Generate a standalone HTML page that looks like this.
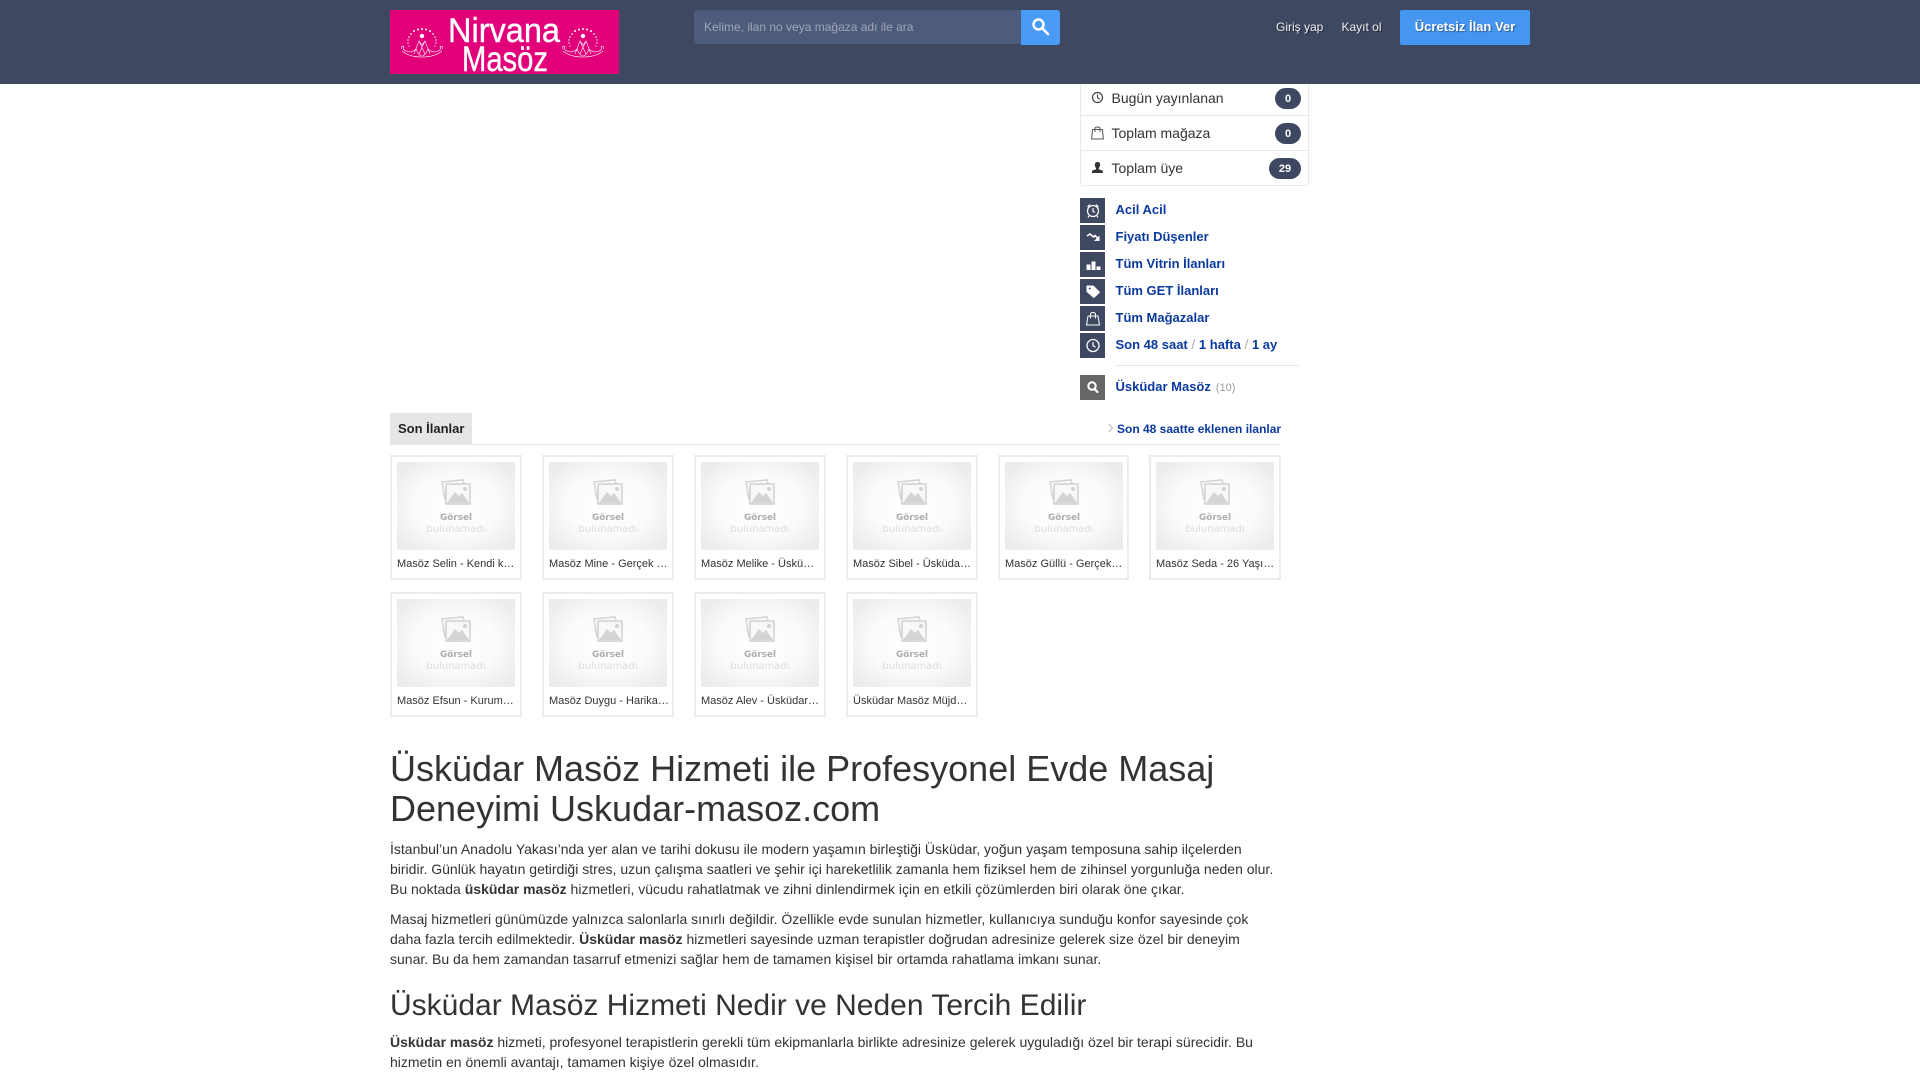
<!DOCTYPE html>
<html lang="tr"><head><meta charset="utf-8"><title>Üsküdar Masöz</title>
<style>
*{box-sizing:border-box}
html,body{margin:0;padding:0;width:1920px;height:1080px;overflow:hidden;background:#fff}
body{font-family:"Liberation Sans",sans-serif;font-size:14px;color:#333;position:relative}
.a{position:absolute;white-space:nowrap}
a{color:#0b3a9e;text-decoration:none}
.hd{left:0;top:0;width:1920px;height:84px;background:#3f4861}
.ib{position:absolute;left:1080px;width:25px;height:25px;background:#3f4861}
.ib svg{display:block}
.sl{position:absolute;left:1115.5px;font-size:13px;font-weight:bold;line-height:20px;white-space:nowrap}
.sl i{font-style:normal;font-weight:normal;color:#aaa;font-size:14px;line-height:1}
.stat{position:absolute;left:1080px;width:229px;height:35px;border:1px solid #e9e9e9;border-top:0}
.st{position:absolute;left:1111.5px;line-height:20px;font-size:14px;color:#333}
.bd{position:absolute;height:21px;border-radius:11px;background:#3f4861;color:#fff;font-size:11px;font-weight:bold;text-align:center;line-height:22px}
.card{position:absolute;width:132px;height:125px;border:2px solid #ececec;background:#fff}
.card svg{position:absolute;left:5px;top:5px;display:block}
.card div{position:absolute;left:5px;top:99px;width:119px;font-size:11px;line-height:16px;color:#333;white-space:nowrap;overflow:hidden;text-overflow:ellipsis}
h1,h2{margin:0;font-weight:normal;color:#333}
</style></head><body>
<svg width="0" height="0" style="position:absolute"><defs>
<radialGradient id="g" cx="50%" cy="50%" r="62%"><stop offset="0" stop-color="#fff"/><stop offset=".55" stop-color="#fbfbfb"/><stop offset="1" stop-color="#ececec"/></radialGradient>
<g id="ph">
<rect width="118" height="88" fill="url(#g)"/>
<path d="M48 38 45 20l21-2 1 3" fill="none" stroke="#d4d4d4" stroke-width="1.6"/>
<rect x="49" y="22" width="24" height="20" fill="#f8f8f8" stroke="#d2d2d2" stroke-width="1.6"/>
<path d="M50 41 58 30 62 34 65 31 72 41Z" fill="#d4d4d4"/><circle cx="68" cy="27" r="2" fill="#d2d2d2"/>
<text x="59" y="58" text-anchor="middle" font-family="DejaVu Sans" font-size="9" font-weight="bold" fill="#aeaeae" textLength="32" lengthAdjust="spacingAndGlyphs">Görsel</text>
<text x="59" y="70" text-anchor="middle" font-family="DejaVu Sans" font-size="10" fill="#dcdcdc" textLength="59" lengthAdjust="spacingAndGlyphs">bulunamadı</text>
</g>
<g id="orn" fill="none" stroke="#fff" stroke-width=".6">
<g fill="#fff" stroke="none"><circle cy="-13" r="1"/><circle cx="-4" cy="-12.5" r="1"/><circle cx="4" cy="-12.5" r="1"/><circle cx="-8" cy="-11" r="1"/><circle cx="8" cy="-11" r="1"/><circle cx="-11" cy="-8" r=".9"/><circle cx="11" cy="-8" r=".9"/><circle cx="-13" cy="-5" r=".8"/><circle cx="13" cy="-5" r=".8"/><circle cx="-14" cy="-2" r=".7"/><circle cx="14" cy="-2" r=".7"/><circle cx="-14" cy="1" r=".7"/><circle cx="14" cy="1" r=".7"/><circle cx="-13" cy="4" r=".6"/><circle cx="13" cy="4" r=".6"/><circle cy="-6" r="2.2"/></g>
<path d="M-8 12-3-1 3 12M8 12 3-1-3 12M-3-1 0 3 3-1"/>
<path d="M-20 7c-2-2 1-4 2-2-1 1-1 3 2 4 4 2 7 1 10-2 2 5 4 7 6 7s4-2 6-7c3 3 6 4 10 2 3-1 3-3 2-4 1-2 4 0 2 2"/>
<path d="M-20 9c6 5 14 6 20 6s14-1 20-6"/>
</g>
</defs></svg>

<div class="a hd"></div>
<svg class="a" style="left:390px;top:10px" width="229" height="64" viewBox="0 0 229 64">
<rect width="229" height="64" fill="#e2007a"/>
<use href="#orn" x="32" y="32"/><use href="#orn" x="193" y="32"/>
<text x="58" y="32" font-family="Liberation Sans" font-size="34" fill="#fff" stroke="#fff" stroke-width=".4" textLength="112" lengthAdjust="spacingAndGlyphs">Nirvana</text>
<text x="72" y="61" font-family="Liberation Sans" font-size="35" fill="#fff" stroke="#fff" stroke-width=".4" textLength="86" lengthAdjust="spacingAndGlyphs">Masöz</text>
</svg>

<div class="a" style="left:694px;top:10px;width:328px;height:34px;background:#4d5b7c;border-radius:3px 0 0 3px"></div>
<div class="a" style="left:704px;top:10px;line-height:34px;font-size:12px;color:#a0a6b4">Kelime, ilan no veya mağaza adı ile ara</div>
<div class="a" style="left:1021px;top:10px;width:39px;height:35px;background:#4a9bf5;border-radius:0 3px 3px 0"></div>
<svg class="a" style="left:1031px;top:17px" width="19" height="19" viewBox="0 0 19 19"><circle cx="7.500" cy="7.500" r="5" fill="none" stroke="#fff" stroke-width="2.400"/><path d="M11 11l6 6" stroke="#fff" stroke-width="2.600" stroke-linecap="round"/></svg>

<div class="a" style="left:1276px;top:17px;line-height:20px;font-size:12px;color:#f0f0f0;text-shadow:1px 1px 1px #222a3c">Giriş yap</div>
<div class="a" style="left:1341.500px;top:17px;line-height:20px;font-size:12px;color:#f0f0f0;text-shadow:1px 1px 1px #222a3c">Kayıt ol</div>
<div class="a" style="left:1400px;top:10px;width:130px;height:35px;background:#4496f0;border-radius:2px;color:#fff;font-size:13px;font-weight:bold;text-align:center;line-height:34px;text-shadow:1px 1px 1px #2c5c99">Ücretsiz İlan Ver</div>

<!-- stats -->
<div class="stat" style="top:84px;height:32px"></div>
<div class="stat" style="top:116px"></div>
<div class="stat" style="top:151px;border-radius:0 0 3px 3px"></div>
<svg class="a" style="left:1091px;top:91px" width="13" height="13" viewBox="0 0 13 13"><circle cx="6.500" cy="6.500" r="5" fill="none" stroke="#444" stroke-width="1.200"/><path d="M6.500 3.500v3.200l2.400 1.400" fill="none" stroke="#444" stroke-width="1.100"/></svg>
<svg class="a" style="left:1091px;top:126px" width="13" height="14" viewBox="0 0 13 14"><path d="M1.500 3.500h10l.8 9.500H.7zM4 6V2.500C4 1.500 5 1 6.500 1S9 1.500 9 2.500V6" fill="none" stroke="#555" stroke-width="1"/></svg>
<svg class="a" style="left:1091px;top:161px" width="13" height="13" viewBox="0 0 13 13"><path d="M6.500 1c1.800 0 2.700 1.200 2.700 2.800 0 1.300-.8 2.700-1.400 3.300v1.100l4 1.600V12H1v-2.200l4-1.600V7.100C4.400 6.500 3.800 5.100 3.800 3.800 3.800 2.200 4.700 1 6.500 1z" fill="#333"/></svg>
<div class="st" style="top:88px">Bugün yayınlanan</div>
<div class="st" style="top:123px">Toplam mağaza</div>
<div class="st" style="top:158px">Toplam üye</div>
<div class="bd" style="left:1275px;top:88px;width:26px">0</div>
<div class="bd" style="left:1275px;top:123px;width:26px">0</div>
<div class="bd" style="left:1269px;top:158px;width:32px">29</div>

<!-- side links -->
<div class="ib" style="top:198px"><svg width="25" height="25" viewBox="0 0 25 25"><circle cx="13" cy="13" r="5.500" fill="none" stroke="#fff" stroke-width="1.200"/><path d="M13 10v3.300l2 1.200M7.500 9 10 6.500M18.500 9 16 6.500M9 18l-1 1.500M17 18l1 1.500" fill="none" stroke="#fff" stroke-width="1.200"/></svg></div>
<div class="ib" style="top:225px"><svg width="25" height="25" viewBox="0 0 25 25"><path d="M7 11l3-2 3.500 3 1.500-1.500 3 3" fill="none" stroke="#fff" stroke-width="1.600"/><path d="M19.500 10.500V16H14z" fill="#fff"/></svg></div>
<div class="ib" style="top:252px"><svg width="25" height="25" viewBox="0 0 25 25" fill="#fff"><rect x="6.500" y="12.500" width="4" height="5.500"/><rect x="11.500" y="9.500" width="4" height="8.500"/><rect x="16.500" y="14.500" width="4" height="3.500"/></svg></div>
<div class="ib" style="top:279px"><svg width="25" height="25" viewBox="0 0 25 25"><path d="M7 7h6.200l6.300 6.300-5.700 5.200-6.800-6z" fill="#fff" stroke="#fff" stroke-linejoin="round"/><circle cx="9.700" cy="9.500" r="1" fill="#3f4861"/></svg></div>
<div class="ib" style="top:306px"><svg width="25" height="25" viewBox="0 0 25 25"><path d="M8 10h10l1.500 9h-13zM10.500 12.500V8.500c0-1.200 1-2 2.500-2s2.500.8 2.500 2v4" fill="none" stroke="#fff" stroke-width="1"/></svg></div>
<div class="ib" style="top:333px"><svg width="25" height="25" viewBox="0 0 25 25"><circle cx="13" cy="12.500" r="6" fill="none" stroke="#fff" stroke-width="1.300"/><path d="M13 9v3.800l2.600 1.300" fill="none" stroke="#fff" stroke-width="1.200"/></svg></div>
<div class="ib" style="top:375px;background:#666"><svg width="25" height="25" viewBox="0 0 25 25"><circle cx="12" cy="11" r="3.700" fill="none" stroke="#fff" stroke-width="2"/><path d="M14.500 14l3 3" stroke="#fff" stroke-width="2.200" stroke-linecap="round"/></svg></div>

<div class="sl" style="top:200px"><a href="#">Acil Acil</a></div>
<div class="sl" style="top:227px"><a href="#">Fiyatı Düşenler</a></div>
<div class="sl" style="top:254px"><a href="#">Tüm Vitrin İlanları</a></div>
<div class="sl" style="top:281px"><a href="#">Tüm GET İlanları</a></div>
<div class="sl" style="top:308px"><a href="#">Tüm Mağazalar</a></div>
<div class="sl" style="top:335px"><a href="#">Son 48 saat</a> <i>/</i> <a href="#">1 hafta</a> <i>/</i> <a href="#">1 ay</a></div>
<div class="a" style="left:1115px;top:365px;width:184px;height:1px;background:#e8e8e8"></div>
<div class="sl" style="top:377px"><a href="#">Üsküdar Masöz</a><span style="font-weight:normal;font-size:11px;color:#999;margin-left:5px">(10)</span></div>

<!-- section head -->
<div class="a" style="left:390px;top:444px;width:891px;height:1px;background:#e6e6e6"></div>
<div class="a" style="left:390px;top:413px;width:82px;height:31px;background:#e6e6e6;font-size:13px;font-weight:bold;color:#222;line-height:31px;padding-left:8px">Son İlanlar</div>
<svg class="a" style="left:1107px;top:423px" width="7" height="10" viewBox="0 0 7 10"><path d="M1.500 1l4 4-4 4" fill="none" stroke="#bbb" stroke-width="1"/></svg>
<div class="a" style="left:1117px;top:419px;line-height:20px;font-size:12px;font-weight:bold"><a href="#">Son 48 saatte eklenen ilanlar</a></div>

<!-- cards -->
<div class="card" style="left:390px;top:455px"><svg width="118" height="88"><use href="#ph"/></svg><div>Masöz Selin - Kendi konutunda hizmet</div></div>
<div class="card" style="left:542px;top:455px"><svg width="118" height="88"><use href="#ph"/></svg><div>Masöz Mine - Gerçek masaj deneyimi</div></div>
<div class="card" style="left:694px;top:455px"><svg width="118" height="88"><use href="#ph"/></svg><div>Masöz Melike - Üsküdar masaj salonu</div></div>
<div class="card" style="left:846px;top:455px"><svg width="118" height="88"><use href="#ph"/></svg><div>Masöz Sibel - Üsküdar masöz hizmeti</div></div>
<div class="card" style="left:998px;top:455px;width:131px"><svg width="118" height="88"><use href="#ph"/></svg><div>Masöz Güllü - Gerçek masöz deneyimi</div></div>
<div class="card" style="left:1149px;top:455px"><svg width="118" height="88"><use href="#ph"/></svg><div>Masöz Seda - 26 Yaşında masöz bayan</div></div>
<div class="card" style="left:390px;top:592px"><svg width="118" height="88"><use href="#ph"/></svg><div>Masöz Efsun - Kurumsal masaj hizmeti</div></div>
<div class="card" style="left:542px;top:592px"><svg width="118" height="88"><use href="#ph"/></svg><div style="width:122px">Masöz Duygu - Harika masaj deneyimi</div></div>
<div class="card" style="left:694px;top:592px"><svg width="118" height="88"><use href="#ph"/></svg><div>Masöz Alev - Üsküdar masöz bayan</div></div>
<div class="card" style="left:846px;top:592px"><svg width="118" height="88"><use href="#ph"/></svg><div>Üsküdar Masöz Müjde hanım hizmeti</div></div>

<!-- article -->
<h1 class="a" style="left:390px;top:749px;font-size:36px;line-height:40px">Üsküdar Masöz Hizmeti ile Profesyonel Evde Masaj<br>Deneyimi Uskudar-masoz.com</h1>
<div class="a" style="left:390px;top:839px;line-height:20px">İstanbul’un Anadolu Yakası’nda yer alan ve tarihi dokusu ile modern yaşamın birleştiği Üsküdar, yoğun yaşam temposuna sahip ilçelerden<br>biridir. Günlük hayatın getirdiği stres, uzun çalışma saatleri ve şehir içi hareketlilik zamanla hem fiziksel hem de zihinsel yorgunluğa neden olur.<br>Bu noktada <b>üsküdar masöz</b> hizmetleri, vücudu rahatlatmak ve zihni dinlendirmek için en etkili çözümlerden biri olarak öne çıkar.</div>
<div class="a" style="left:390px;top:909px;line-height:20px">Masaj hizmetleri günümüzde yalnızca salonlarla sınırlı değildir. Özellikle evde sunulan hizmetler, kullanıcıya sunduğu konfor sayesinde çok<br>daha fazla tercih edilmektedir. <b>Üsküdar masöz</b> hizmetleri sayesinde uzman terapistler doğrudan adresinize gelerek size özel bir deneyim<br>sunar. Bu da hem zamandan tasarruf etmenizi sağlar hem de tamamen kişisel bir ortamda rahatlama imkanı sunar.</div>
<h2 class="a" style="left:390px;top:989px;font-size:30px;line-height:33px">Üsküdar Masöz Hizmeti Nedir ve Neden Tercih Edilir</h2>
<div class="a" style="left:390px;top:1032px;line-height:20px"><b>Üsküdar masöz</b> hizmeti, profesyonel terapistlerin gerekli tüm ekipmanlarla birlikte adresinize gelerek uyguladığı özel bir terapi sürecidir. Bu<br>hizmetin en önemli avantajı, tamamen kişiye özel olmasıdır.</div>
</body></html>
